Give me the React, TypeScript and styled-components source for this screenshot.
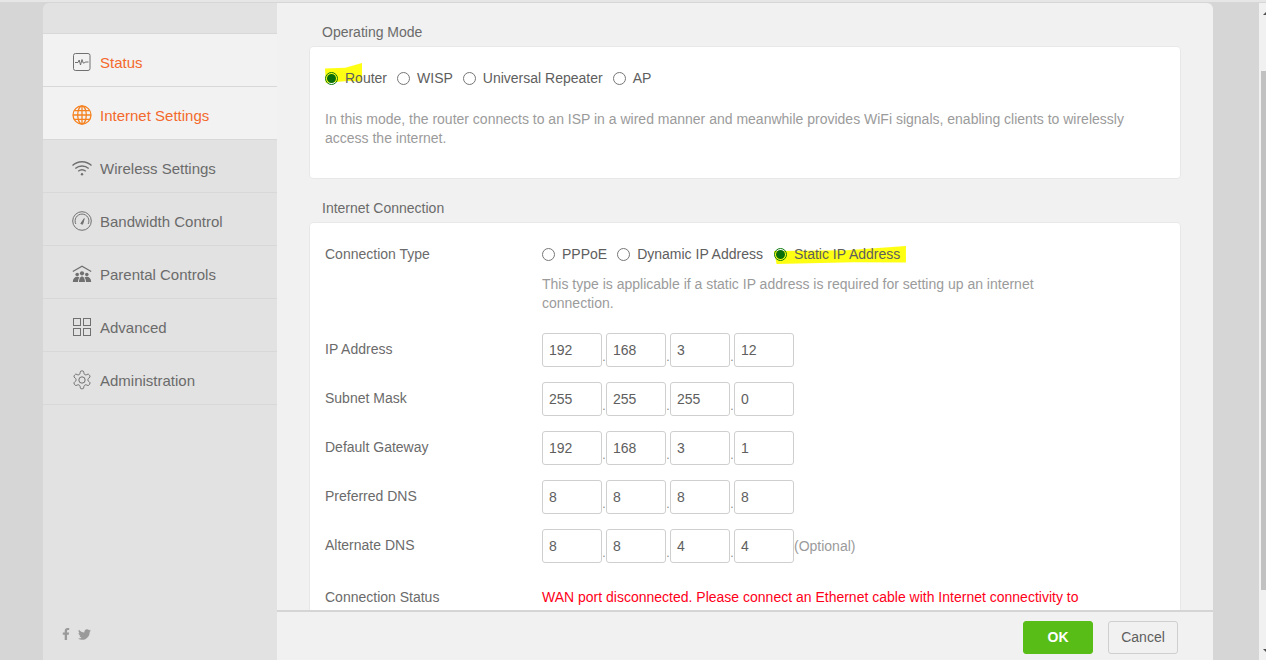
import { FC, ReactNode } from "react";
import styled, { createGlobalStyle } from "styled-components";
import { FaFacebookF, FaTwitter } from "react-icons/fa";

const GlobalStyle = createGlobalStyle`
  html, body {
    margin: 0;
    height: 100%;
    overflow: hidden;
    background: #d6d6d6;
    font-family: "Liberation Sans", Arial, sans-serif;
  }
`;

const Page = styled.div`
  display: flex;
  height: 660px;
  border-top: 2px solid #e6e6e6;
  box-sizing: border-box;
`;
const Frame = styled.div`
  display: flex;
  width: 1170px;
  height: 657px;
  margin: 1px 0 0 43px;
  border-radius: 6px 6px 0 0;
  overflow: hidden;
`;
const Sidebar = styled.aside`
  display: flex;
  flex-direction: column;
  justify-content: space-between;
  width: 234px;
  padding-top: 30px;
  background: #e2e2e2;
  box-sizing: border-box;
`;
const Nav = styled.nav`
  display: flex;
  flex-direction: column;
  border-top: 1px solid #d8d8d8;
`;
const NavItem = styled.div<{ $active?: boolean; $open?: boolean }>`
  display: flex;
  align-items: center;
  gap: 8px;
  box-sizing: border-box;
  height: 53px;
  padding: 5px 0 0 29px;
  border-bottom: 1px solid #d8d8d8;
  background: ${(p) => (p.$open ? "#f2f2f2" : "transparent")};
  color: ${(p) => (p.$active ? "#f4692c" : "#6b6b6b")};
  font-size: 15px;
`;
const NavIcon = styled.svg<{ $tone?: string }>`
  width: 20px;
  height: 20px;
  flex: none;
  margin-top: -2px;
  fill: none;
  stroke: currentColor;
  color: ${(p) => p.$tone || "#707070"};
`;
const Social = styled.div`
  display: flex;
  align-items: center;
  gap: 6px;
  height: 20px;
  margin: 0 0 16px 17px;
  color: #9a9a9a;
`;
const Main = styled.main`
  display: flex;
  flex-direction: column;
  flex: 1;
  min-width: 0;
  background: #f1f1f1;
`;
const Content = styled.div`
  flex: 1;
  min-height: 0;
  overflow: hidden;
  padding: 0 32px;
`;
const SectionTitle = styled.h2`
  margin: 0;
  padding-left: 13px;
  height: 43px;
  line-height: 59px;
  box-sizing: border-box;
  font-size: 14px;
  font-weight: normal;
  color: #6b6b6b;
`;
const ConnectionTitle = styled(SectionTitle)`
  height: 41px;
  line-height: 55px;
`;
const Card = styled.section<{ $height: number }>`
  box-sizing: border-box;
  width: 872px;
  height: ${(p) => p.$height}px;
  background: #fff;
  border: 1px solid #e8e8e8;
  border-radius: 4px;
  padding: 0 15px;
`;
const ModeCard = styled(Card)`
  padding-top: 21px;
  margin-bottom: 2px;
`;
const RadioRow = styled.div`
  display: flex;
  align-items: center;
  height: 20px;
  font-size: 14px;
  color: #5e5e5e;
`;
const RadioLabel = styled.label<{ $gap: number }>`
  position: relative;
  display: flex;
  align-items: center;
  gap: 7px;
  margin-right: ${(p) => p.$gap}px;
`;
const RadioText = styled.span`
  position: relative;
`;
const Marker = styled.span<{ $w: number; $h: number; $top: number }>`
  position: absolute;
  left: 0;
  top: ${(p) => p.$top}px;
  width: ${(p) => p.$w}px;
  height: ${(p) => p.$h}px;
  background: #ffff14;
  clip-path: polygon(0 28%, 55% 24%, 100% 0, 100% 92%, 60% 90%, 2% 100%);
`;
const RadioDot = styled.span<{ $on?: boolean }>`
  position: relative;
  box-sizing: border-box;
  width: 13px;
  height: 13px;
  border-radius: 50%;
  border: 1px solid ${(p) => (p.$on ? "#0b7a0b" : "#767676")};
  background: ${(p) => (p.$on ? "transparent" : "#fff")};
  &::after {
    content: "";
    display: ${(p) => (p.$on ? "block" : "none")};
    width: 9px;
    height: 9px;
    margin: 1px;
    border-radius: 50%;
    background: #0a6e0a;
  }
`;
const Hint = styled.p`
  margin: 0;
  font-size: 14px;
  line-height: 19px;
  color: #9b9b9b;
`;
const ModeHint = styled(Hint)`
  margin-top: 22px;
  max-width: 830px;
`;
const Form = styled.div`
  display: grid;
  grid-template-columns: 217px 1fr;
  padding-top: 21px;
`;
const FieldLabel = styled.div`
  font-size: 14px;
  line-height: 20px;
  color: #6b6b6b;
`;
const ConnectionHint = styled(Hint)`
  margin: 11px 0 20px;
  width: 510px;
`;
const FieldLabelCentered = styled(FieldLabel)`
  height: 34px;
  line-height: 32px;
  margin-bottom: 15px;
`;
const IpRow = styled.div`
  display: flex;
  align-items: flex-start;
  height: 34px;
  margin-bottom: 15px;
`;
const Octet = styled.div`
  box-sizing: border-box;
  width: 60px;
  height: 34px;
  padding-left: 6px;
  line-height: 32px;
  background: #fff;
  border: 1px solid #cfcfcf;
  border-radius: 3px;
  font-size: 14px;
  color: #5e5e5e;
`;
const Dot = styled.span`
  width: 4px;
  padding-top: 16px;
  text-align: center;
  line-height: 16px;
  font-size: 12px;
  color: #888;
`;
const Optional = styled.span`
  line-height: 34px;
  font-size: 14px;
  color: #9b9b9b;
`;
const StatusText = styled.div`
  font-size: 14px;
  line-height: 20px;
  margin-top: 9px;
  color: #ff0019;
  width: 545px;
`;
const StatusLabel = styled(FieldLabel)`
  margin-top: 9px;
`;
const Footer = styled.footer`
  display: flex;
  justify-content: flex-end;
  gap: 15px;
  height: 50px;
  padding: 9px 35px 0 0;
  box-sizing: border-box;
  border-top: 2px solid #d5d5d5;
  background: #f1f1f1;
`;
const Button = styled.button<{ $primary?: boolean }>`
  box-sizing: border-box;
  width: 70px;
  height: 33px;
  border-radius: 3px;
  border: 1px solid ${(p) => (p.$primary ? "#58be17" : "#cfcfcf")};
  background: ${(p) => (p.$primary ? "#58be17" : "#f1f1f1")};
  color: ${(p) => (p.$primary ? "#fff" : "#5e5e5e")};
  font-family: inherit;
  font-size: 14px;
  font-weight: ${(p) => (p.$primary ? "bold" : "normal")};
  padding: 0 0 2px;
`;
const Scrollbar = styled.div`
  position: absolute;
  top: 3px;
  right: 0;
  bottom: 0;
  width: 7px;
  background: #f1f1f1;
  &::before {
    content: "";
    position: absolute;
    top: 68px;
    right: 0;
    bottom: 70px;
    width: 5px;
    background: #c1c1c1;
  }
`;
const ScrollArrow = styled.span<{ $down?: boolean }>`
  position: absolute;
  right: 0;
  ${(p) => (p.$down ? "bottom: 8px;" : "top: 9px;")}
  width: 0;
  height: 0;
  border-left: 3px solid transparent;
  ${(p) => (p.$down ? "border-top" : "border-bottom")}: 3px solid #505050;
`;

const StatusIcon = () => (
  <NavIcon viewBox="0 0 20 20" strokeWidth="1">
    <rect x="1.500" y="1.500" width="16.500" height="17" rx="2" />
    <path d="M3 10.500h3l1.200-2.500 1.300 5 1.500-5.500 1.200 3.500h1.200l.8-1h3.300" />
  </NavIcon>
);
const GlobeIcon = () => (
  <NavIcon viewBox="0 0 20 20" strokeWidth="1.300" $tone="#f58220">
    <circle cx="10" cy="10" r="9" />
    <ellipse cx="10" cy="10" rx="4.300" ry="9" />
    <path d="M10 1v18M1 10h18M2.500 5.600h15M2.500 14.400h15" />
  </NavIcon>
);
const WifiIcon = () => (
  <NavIcon viewBox="0 0 20 20" strokeWidth="1.400">
    <path d="M.5 7.500c5.400-5 13.600-5 19 0M3.300 10.500c3.800-3.400 9.600-3.400 13.400 0M6.200 13.300c2.200-1.800 5.400-1.800 7.600 0" />
    <circle cx="10" cy="16.300" r="1.200" fill="currentColor" stroke="none" />
  </NavIcon>
);
const GaugeIcon = () => (
  <NavIcon viewBox="0 0 20 20" strokeWidth="1">
    <circle cx="10" cy="10" r="9.300" />
    <path d="M3.800 13a6.900 6.900 0 1 1 12.400 0" />
    <path d="M8.800 12.600l3.400-5-1.600 5.600z" fill="currentColor" />
  </NavIcon>
);
const ParentalIcon = () => (
  <NavIcon viewBox="0 0 20 20" strokeWidth="1.300">
    <path d="M.8 7.500L10 2.300l9.200 5.200" />
    <g fill="currentColor" stroke="none">
      <circle cx="10" cy="9.300" r="2.100" />
      <circle cx="5.200" cy="10.500" r="1.800" />
      <circle cx="14.800" cy="10.500" r="1.800" />
      <path d="M.8 18c0-3.300 1.900-5.300 4.400-5.300 1 0 1.700.3 2.300.8C6.400 14.600 6 16.300 6 18zM19.200 18c0-3.300-1.900-5.300-4.400-5.300-1 0-1.700.3-2.300.8 1.100 1.100 1.500 2.800 1.500 4.500zM7 18c0-3 1.200-5.500 3-5.500s3 2.500 3 5.500z" />
    </g>
  </NavIcon>
);
const GridIcon = () => (
  <NavIcon viewBox="0 0 20 20" strokeWidth="1">
    <rect x="1.500" y="1.500" width="7" height="7" />
    <rect x="11.500" y="1.500" width="7" height="7" />
    <rect x="1.500" y="11.500" width="7" height="7" />
    <rect x="11.500" y="11.500" width="7" height="7" />
  </NavIcon>
);
const GearIcon = () => (
  <NavIcon viewBox="0 0 24 24" strokeWidth="1.200">
    <path d="M12.200 1h-.4a2 2 0 0 0-2 2v.6a2 2 0 0 1-1 1.700l-.4.300a2 2 0 0 1-2 0l-.5-.3a2 2 0 0 0-2.700.7l-.5.800a2 2 0 0 0 .7 2.700l.5.300a2 2 0 0 1 1 1.700v.6a2 2 0 0 1-1 1.700l-.5.300a2 2 0 0 0-.7 2.700l.5.800a2 2 0 0 0 2.700.7l.5-.3a2 2 0 0 1 2 0l.4.300a2 2 0 0 1 1 1.700v.6a2 2 0 0 0 2 2h.4a2 2 0 0 0 2-2v-.6a2 2 0 0 1 1-1.700l.4-.3a2 2 0 0 1 2 0l.5.3a2 2 0 0 0 2.700-.7l.5-.8a2 2 0 0 0-.7-2.700l-.5-.3a2 2 0 0 1-1-1.700v-.6a2 2 0 0 1 1-1.700l.5-.3a2 2 0 0 0 .7-2.700l-.5-.8a2 2 0 0 0-2.700-.7l-.5.3a2 2 0 0 1-2 0l-.4-.3a2 2 0 0 1-1-1.700V3a2 2 0 0 0-2-2z" />
    <circle cx="12" cy="12" r="3.800" />
  </NavIcon>
);

const navItems: { label: string; icon: ReactNode; active?: boolean; open?: boolean }[] = [
  { label: "Status", icon: <StatusIcon />, active: true, open: true },
  { label: "Internet Settings", icon: <GlobeIcon />, active: true, open: true },
  { label: "Wireless Settings", icon: <WifiIcon /> },
  { label: "Bandwidth Control", icon: <GaugeIcon /> },
  { label: "Parental Controls", icon: <ParentalIcon /> },
  { label: "Advanced", icon: <GridIcon /> },
  { label: "Administration", icon: <GearIcon /> },
];

const ipFields = [
  { label: "IP Address", octets: ["192", "168", "3", "12"] },
  { label: "Subnet Mask", octets: ["255", "255", "255", "0"] },
  { label: "Default Gateway", octets: ["192", "168", "3", "1"] },
  { label: "Preferred DNS", octets: ["8", "8", "8", "8"] },
  { label: "Alternate DNS", octets: ["8", "8", "4", "4"], optional: true },
];

const IpField: FC<{ label: string; children: ReactNode }> = ({ label, children }) => (
  <>
    <FieldLabelCentered>{label}</FieldLabelCentered>
    <IpRow>{children}</IpRow>
  </>
);

const OctetCell: FC<{ value: string; last: boolean }> = ({ value, last }) => (
  <>
    <Octet>{value}</Octet>
    {!last && <Dot>.</Dot>}
  </>
);

const App: FC = () => {
  return (
    <>
      <GlobalStyle />
      <Page>
        <Frame>
          <Sidebar>
            <Nav>
              {navItems.map((item) => (
                <NavItem key={item.label} $active={item.active} $open={item.open}>
                  {item.icon}
                  {item.label}
                </NavItem>
              ))}
            </Nav>
            <Social>
              <FaFacebookF size={12} />
              <FaTwitter size={13} />
            </Social>
          </Sidebar>
          <Main>
            <Content>
              <SectionTitle>Operating Mode</SectionTitle>
              <ModeCard $height={133}>
                <RadioRow>
                  <RadioLabel $gap={10}>
                    <Marker $w={37} $h={20} $top={-7} />
                    <RadioDot $on />
                    <RadioText>Router</RadioText>
                  </RadioLabel>
                  <RadioLabel $gap={10}>
                    <RadioDot />
                    <RadioText>WISP</RadioText>
                  </RadioLabel>
                  <RadioLabel $gap={10}>
                    <RadioDot />
                    <RadioText>Universal Repeater</RadioText>
                  </RadioLabel>
                  <RadioLabel $gap={0}>
                    <RadioDot />
                    <RadioText>AP</RadioText>
                  </RadioLabel>
                </RadioRow>
                <ModeHint>
                  In this mode, the router connects to an ISP in a wired manner and meanwhile provides WiFi signals,
                  enabling clients to wirelessly access the internet.
                </ModeHint>
              </ModeCard>
              <ConnectionTitle>Internet Connection</ConnectionTitle>
              <Card $height={420}>
                <Form>
                  <FieldLabel>Connection Type</FieldLabel>
                  <div>
                    <RadioRow>
                      <RadioLabel $gap={10}>
                        <RadioDot />
                        <RadioText>PPPoE</RadioText>
                      </RadioLabel>
                      <RadioLabel $gap={11}>
                        <RadioDot />
                        <RadioText>Dynamic IP Address</RadioText>
                      </RadioLabel>
                      <RadioLabel $gap={0}>
                        <Marker $w={132} $h={18} $top={0} />
                        <RadioDot $on />
                        <RadioText>Static IP Address</RadioText>
                      </RadioLabel>
                    </RadioRow>
                    <ConnectionHint>
                      This type is applicable if a static IP address is required for setting up an internet connection.
                    </ConnectionHint>
                  </div>
                  {ipFields.map((field) => (
                    <IpField key={field.label} label={field.label}>
                      {field.octets.map((value, i) => (
                        <OctetCell key={i} value={value} last={i === 3} />
                      ))}
                      {field.optional && <Optional>(Optional)</Optional>}
                    </IpField>
                  ))}
                  <StatusLabel>Connection Status</StatusLabel>
                  <StatusText>
                    WAN port disconnected. Please connect an Ethernet cable with Internet connectivity to
                  </StatusText>
                </Form>
              </Card>
            </Content>
            <Footer>
              <Button $primary>OK</Button>
              <Button>Cancel</Button>
            </Footer>
          </Main>
        </Frame>
        <Scrollbar>
          <ScrollArrow />
          <ScrollArrow $down />
        </Scrollbar>
      </Page>
    </>
  );
};

export default App;
